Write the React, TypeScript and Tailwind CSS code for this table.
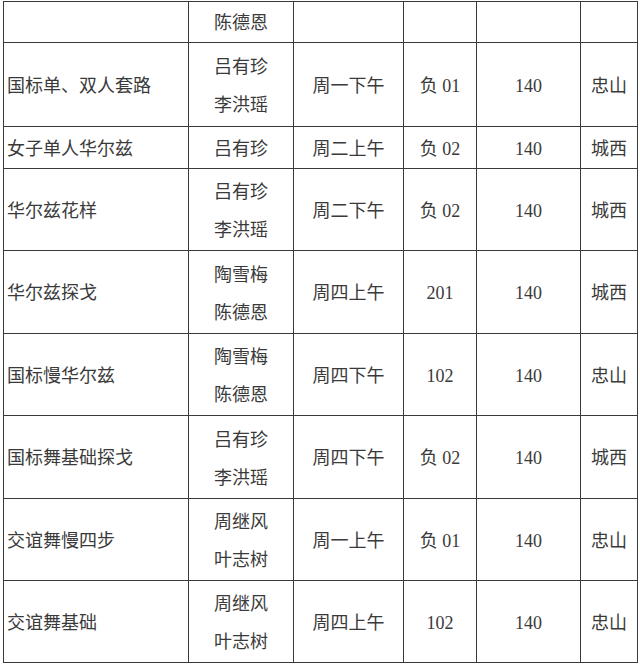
import React from 'react'

type Row = {
  name: string
  teachers: string[]
  time: string
  room: string
  fee: string
  campus: string
  h: string
}

const rows: Row[] = [
  { name: '', teachers: ['陈德恩'], time: '', room: '', fee: '', campus: '', h: 'h-[41px]' },
  { name: '国标单、双人套路', teachers: ['吕有珍', '李洪瑶'], time: '周一下午', room: '负 01', fee: '140', campus: '忠山', h: 'h-[84px]' },
  { name: '女子单人华尔兹', teachers: ['吕有珍'], time: '周二上午', room: '负 02', fee: '140', campus: '城西', h: 'h-[42px]' },
  { name: '华尔兹花样', teachers: ['吕有珍', '李洪瑶'], time: '周二下午', room: '负 02', fee: '140', campus: '城西', h: 'h-[82px]' },
  { name: '华尔兹探戈', teachers: ['陶雪梅', '陈德恩'], time: '周四上午', room: '201', fee: '140', campus: '城西', h: 'h-[83px]' },
  { name: '国标慢华尔兹', teachers: ['陶雪梅', '陈德恩'], time: '周四下午', room: '102', fee: '140', campus: '忠山', h: 'h-[82px]' },
  { name: '国标舞基础探戈', teachers: ['吕有珍', '李洪瑶'], time: '周四下午', room: '负 02', fee: '140', campus: '城西', h: 'h-[83px]' },
  { name: '交谊舞慢四步', teachers: ['周继风', '叶志树'], time: '周一上午', room: '负 01', fee: '140', campus: '忠山', h: 'h-[82px]' },
  { name: '交谊舞基础', teachers: ['周继风', '叶志树'], time: '周四上午', room: '102', fee: '140', campus: '忠山', h: 'h-[82px]' },
]

const cell = 'border-[1.5px] border-[#3a3a3a] p-0 pt-[3px] align-middle leading-[27px]'

export default function App() {
  return (
    <div
      className="min-h-[664px] bg-white pl-[3px] pt-[1px] text-[18px] text-[#3a3a3a]"
      style={{ fontFamily: '"Liberation Serif", "Noto Sans CJK SC", serif' }}
    >
      <table className="w-[634px] table-fixed border-collapse">
        <colgroup>
          <col className="w-[185px]" />
          <col className="w-[105px]" />
          <col className="w-[110px]" />
          <col className="w-[73px]" />
          <col className="w-[104px]" />
          <col className="w-[57px]" />
        </colgroup>
        <tbody>
          {rows.map((r, i) => (
            <tr key={i} className={r.h}>
              <td className={`${cell} pl-[3px] text-left`}>{r.name}</td>
              <td className={`${cell} text-center`}>
                {r.teachers.map((t) => (
                  <div key={t} className={r.teachers.length > 1 ? 'leading-[38px]' : ''}>
                    {t}
                  </div>
                ))}
              </td>
              <td className={`${cell} text-center`}>{r.time}</td>
              <td className={`${cell} text-center`}>{r.room}</td>
              <td className={`${cell} text-center`}>{r.fee}</td>
              <td className={`${cell} text-center`}>{r.campus}</td>
            </tr>
          ))}
        </tbody>
      </table>
    </div>
  )
}
